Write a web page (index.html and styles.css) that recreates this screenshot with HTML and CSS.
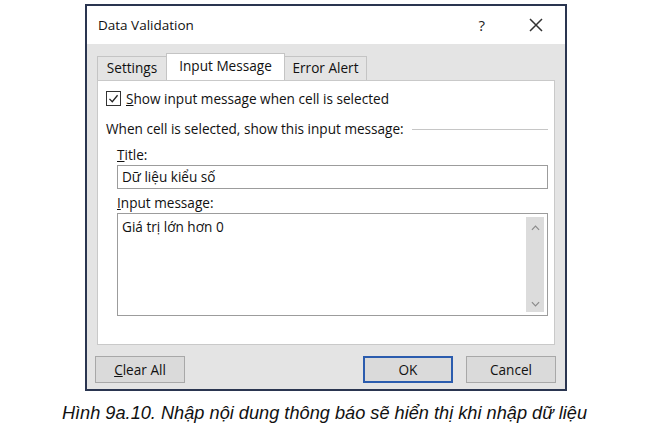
FILE: index.html
```html
<!DOCTYPE html>
<html lang="vi">
<head>
  <meta charset="UTF-8" />
  <title>Data Validation</title>
  <link rel="stylesheet" href="styles.css">
</head>
<body>
  <!-- Hộp thoại Data Validation -->
  <div class="dialog">
    <div class="titlebar">
      <span class="title">Data Validation</span>
      <span class="help">?</span>
      <svg class="close" viewBox="0 0 14 14"><path d="M1 1L13 13M13 1L1 13"/></svg>
    </div>

    <div class="body">
      <div class="tabs">
        <div class="tab">Settings</div>
        <div class="tab active">Input Message</div>
        <div class="tab">Error Alert</div>
      </div>

      <div class="panel">
        <label class="check-row">
          <span class="checkbox">
            <svg viewBox="0 0 16 16"><path d="M3 8.5L6.5 12L13 4"/></svg>
          </span>
          <span><u>S</u>how input message when cell is selected</span>
        </label>

        <div class="group-title">
          <span>When cell is selected, show this input message:</span>
          <span class="rule"></span>
        </div>

        <div class="field">
          <div class="field-label first"><u>T</u>itle:</div>
          <div class="textbox">Dữ liệu kiểu số</div>
        </div>

        <div class="field">
          <div class="field-label"><u>I</u>nput message:</div>
          <div class="textarea">
            <div class="textarea-text">Giá trị lớn hơn 0</div>
            <div class="scrollbar">
              <svg viewBox="0 0 10 6"><path d="M1 5L5 1L9 5"/></svg>
              <svg viewBox="0 0 10 6"><path d="M1 1L5 5L9 1"/></svg>
            </div>
          </div>
        </div>
      </div>

      <div class="buttons">
        <button class="btn"><u>C</u>lear All</button>
        <span class="spacer"></span>
        <button class="btn default">OK</button>
        <button class="btn">Cancel</button>
      </div>
    </div>
  </div>

  <p class="caption">Hình 9a.10. Nhập nội dung thông báo sẽ hiển thị khi nhập dữ liệu</p>
</body>
</html>
```

FILE: styles.css
```css
* {
  box-sizing: border-box;
}

html, body {
  margin: 0;
  padding: 0;
  background: #ffffff;
}

body {
  padding-top: 4px;
  font-family: 'Open Sans', 'Noto Sans', sans-serif;
  color: #111111;
}

/* =================
   HỘP THOẠI
   ================= */
.dialog {
  width: 482px;
  margin-left: 85px;
  border: 2px solid #2a3550;
  background: #e4e4e4;
}

.titlebar {
  height: 38px;
  background: #ffffff;
  display: flex;
  align-items: center;
  padding-left: 11px;
  padding-right: 22px;
  font-size: 13.5px;
}

.title {
  flex: 1;
}

.help {
  font-size: 15px;
  margin-right: 44px;
  color: #222;
}

.close {
  width: 14px;
  height: 14px;
  stroke: #333;
  stroke-width: 1.5;
  fill: none;
}

.body {
  padding: 9px 9px 6px 8px;
}

/* Pestañas */
.tabs {
  display: flex;
  align-items: flex-end;
  height: 27px;
  margin-left: 2px;
  font-size: 13.6px;
}

.tab {
  height: 24px;
  padding: 1px 0 0 0;
  text-align: center;
  white-space: nowrap;
  border: 1px solid #c4c4c4;
  border-bottom: none;
  background: #e4e4e4;
  margin-right: -1px;
}

.tab:first-child {
  width: 70px;
}

.tab.active {
  height: 27px;
  width: 119px;
  padding-top: 2px;
  background: #ffffff;
  position: relative;
  z-index: 1;
}

.tab:last-child {
  width: 83px;
}

.panel {
  background: #ffffff;
  border: 1px solid #c9c9c9;
  height: 265px;
  margin-left: 2px;
  margin-right: 1px;
  padding: 9px 6px 0 8px;
  font-size: 13.6px;
}

.check-row {
  display: flex;
  align-items: center;
  gap: 5px;
  height: 17px;
}

.checkbox {
  width: 15px;
  height: 15px;
  border: 1px solid #333;
  display: flex;
}

.checkbox svg {
  width: 13px;
  height: 13px;
  stroke: #222;
  stroke-width: 1.6;
  fill: none;
}

.group-title {
  display: flex;
  align-items: center;
  gap: 8px;
  margin-top: 13px;
  line-height: 18px;
}

.rule {
  flex: 1;
  height: 1px;
  background: #c6c6c6;
}

.field {
  margin-left: 11px;
}

.field-label {
  margin-top: 5px;
  line-height: 18px;
}

.field-label.first {
  margin-top: 8px;
}

.textbox {
  height: 24px;
  border: 1px solid #9c9c9c;
  padding: 1px 4px;
  margin-top: 1px;
}

.textarea {
  height: 103px;
  border: 1px solid #9c9c9c;
  margin-top: 1px;
  display: flex;
  padding: 3px 3px 3px 4px;
}

.textarea-text {
  flex: 1;
}

.scrollbar {
  width: 18px;
  background: #dcdcdc;
  display: flex;
  flex-direction: column;
  justify-content: space-between;
  align-items: center;
  padding: 8px 0 5px 0;
}

.scrollbar svg {
  width: 9px;
  height: 6px;
  stroke: #8a8a8a;
  stroke-width: 1.3;
  fill: none;
}

/* Botones */
.buttons {
  display: flex;
  margin-top: 11px;
  gap: 13px;
}

.spacer {
  flex: 1;
}

.btn {
  width: 90px;
  height: 27px;
  border: 1px solid #a8a8a8;
  background: #dadada;
  font-family: 'Open Sans', 'Noto Sans', sans-serif;
  font-size: 13.6px;
  color: #111111;
  padding: 0;
}

.btn.default {
  border: 2px solid #2b5cae;
}

.caption {
  margin: 12px 0 0 0;
  text-align: center;
  font-family: 'Liberation Sans', Arial, sans-serif;
  font-style: italic;
  font-size: 18.2px;
  color: #111;
}
```
